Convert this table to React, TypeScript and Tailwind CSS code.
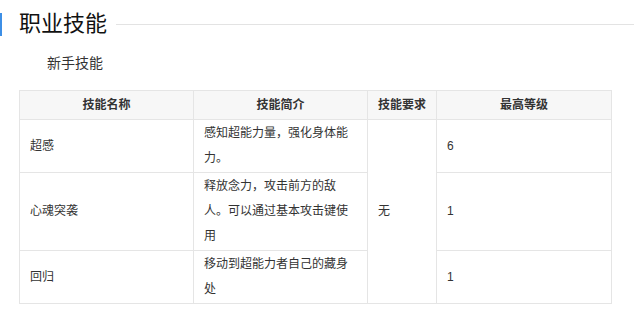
import React from "react";

const font = { fontFamily: '"Liberation Sans", "Noto Sans CJK SC", sans-serif' };

const rows = [
  { name: "超感", desc: "感知超能力量，强化身体能力。", level: "6" },
  { name: "心魂突袭", desc: "释放念力，攻击前方的敌人。可以通过基本攻击键使用", level: "1" },
  { name: "回归", desc: "移动到超能力者自己的藏身处", level: "1" },
];

const SkillTable = () => {
  return (
    <div className="w-[634px] h-[319px] bg-white text-[#333]" style={font}>
      {/* Section title */}
      <div className="flex items-center pt-[12px] h-[36px]">
        <div className="w-[2px] h-[23px] bg-[#3d8fe6]"></div>
        <div className="ml-[17px] text-[22px] leading-[24px] text-[#111]">职业技能</div>
        <div className="flex-1 ml-[9px] h-px bg-[#e3e3e3]"></div>
      </div>

      <div className="pl-[47px] mt-[17px] text-[14px] leading-[20px] text-[#333]">新手技能</div>

      {/* Skill table */}
      <div className="pl-[19px] mt-[17px]">
        <table className="w-[592px] border-collapse text-[12px] table-fixed">
          <colgroup>
            <col className="w-[174px]" />
            <col className="w-[174px]" />
            <col className="w-[69px]" />
            <col className="w-[175px]" />
          </colgroup>
          <thead>
            <tr className="bg-[#f7f7f7] h-[29px]">
              <th className="border border-[#e5e5e5] font-bold text-center leading-[25px]">技能名称</th>
              <th className="border border-[#e5e5e5] font-bold text-center leading-[25px]">技能简介</th>
              <th className="border border-[#e5e5e5] font-bold text-center leading-[25px]">技能要求</th>
              <th className="border border-[#e5e5e5] font-bold text-center leading-[25px]">最高等级</th>
            </tr>
          </thead>
          <tbody>
            {rows.map((row, i) => (
              <tr key={row.name}>
                <td className="border border-[#e5e5e5] px-[10px] py-[1px] leading-[25px] align-middle">{row.name}</td>
                <td className="border border-[#e5e5e5] px-[10px] py-[1px] leading-[25px] align-middle">{row.desc}</td>
                {i === 0 && (
                  <td rowSpan={3} className="border border-[#e5e5e5] px-[10px] leading-[25px] align-middle">
                    无
                  </td>
                )}
                <td className="border border-[#e5e5e5] px-[10px] py-[1px] leading-[25px] align-middle">{row.level}</td>
              </tr>
            ))}
          </tbody>
        </table>
      </div>
    </div>
  );
};

export default SkillTable;
